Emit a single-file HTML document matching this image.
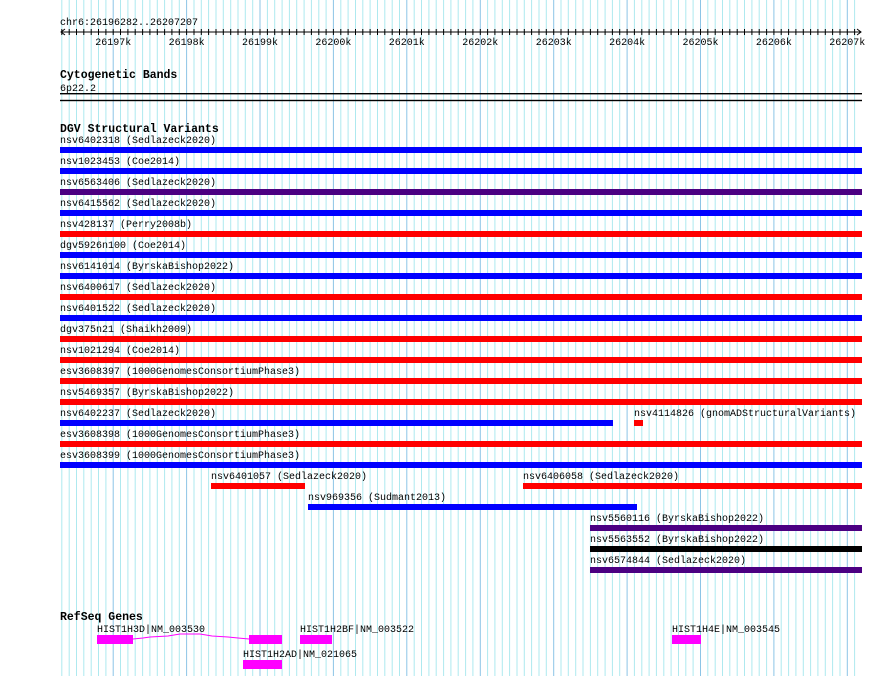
<!DOCTYPE html>
<html><head><meta charset="utf-8"><style>
html,body{margin:0;padding:0;background:#fff;width:890px;height:676px;overflow:hidden}
svg{display:block}
text{font-family:"Liberation Mono","DejaVu Sans Mono",monospace;font-size:10px;fill:#000}
.b{font-weight:bold;font-size:11.5px}
</style></head><body>
<svg id="s" width="890" height="676" xmlns="http://www.w3.org/2000/svg">
<g id="grid"></g>
<g id="rt"></g>
<text x="60" y="25">chr6:26196282..26207207</text>
<line x1="61" y1="32" x2="861" y2="32" stroke="#000" stroke-width="1"/>
<path d="M65,29 L61,32 L65,35 M857,29 L861,32 L857,35" fill="none" stroke="#000"/>
<text class="b" x="60" y="78">Cytogenetic Bands</text>
<text x="60" y="91">6p22.2</text>
<rect x="60" y="93" width="802" height="1.4" fill="#000"/>
<rect x="60" y="99.8" width="802" height="1.4" fill="#000"/>
<text class="b" x="60" y="132">DGV Structural Variants</text>
<g id="rows"></g>
<text class="b" x="60" y="620">RefSeq Genes</text>
<text x="97" y="632">HIST1H3D|NM_003530</text>
<rect x="97" y="635" width="36" height="9" fill="#ff00ff"/>
<path d="M133,639 L143,638 L150,637 L168,636 L180,634 L200,634 L212,636 L228,637 L238,638 L249,639" fill="none" stroke="#ff00ff" stroke-width="1"/>
<rect x="249" y="635" width="33" height="9" fill="#ff00ff"/>
<text x="300" y="632">HIST1H2BF|NM_003522</text>
<rect x="300" y="635" width="32" height="9" fill="#ff00ff"/>
<text x="243" y="657">HIST1H2AD|NM_021065</text>
<rect x="243" y="660" width="39" height="9" fill="#ff00ff"/>
<text x="672" y="632">HIST1H4E|NM_003545</text>
<rect x="672" y="635" width="29" height="9" fill="#ff00ff"/>
</svg>
<script>
var NS="http://www.w3.org/2000/svg";
function el(p,t,a){var e=document.createElementNS(NS,t);for(var k in a)e.setAttribute(k,a[k]);if(a.txt){e.textContent=a.txt;e.removeAttribute('txt');}p.appendChild(e);return e;}
var g=document.getElementById('grid'),rt=document.getElementById('rt'),rows=document.getElementById('rows');
var s=802/10925,st=26196282;
for(var bp=26196300;bp<=26207200;bp+=100){
 var x=Math.round((60+(bp-st)*s)*10)/10+0.5;
 if(x>861)break;
 var maj=bp%1000==0;
 el(g,'line',{x1:x,y1:0,x2:x,y2:676,stroke:maj?'#8cc4e6':'#aee9ef','stroke-width':1});
 el(rt,'line',{x1:x,y1:29,x2:x,y2:35,stroke:'#000','stroke-width':1});
 if(maj){el(rt,'text',{x:x,y:45,'text-anchor':'middle',txt:(bp/1000)+'k'});}
}
var B='#0000ff',R='#ff0000',P='#4b0082',K='#000';
var data=[
['nsv6402318 (Sedlazeck2020)',B],['nsv1023453 (Coe2014)',B],['nsv6563406 (Sedlazeck2020)',P],
['nsv6415562 (Sedlazeck2020)',B],['nsv428137 (Perry2008b)',R],['dgv5926n100 (Coe2014)',B],
['nsv6141014 (ByrskaBishop2022)',B],['nsv6400617 (Sedlazeck2020)',R],['nsv6401522 (Sedlazeck2020)',B],
['dgv375n21 (Shaikh2009)',R],['nsv1021294 (Coe2014)',R],['esv3608397 (1000GenomesConsortiumPhase3)',R],
['nsv5469357 (ByrskaBishop2022)',R],['nsv6402237 (Sedlazeck2020)',B,60,613],
['esv3608398 (1000GenomesConsortiumPhase3)',R],['esv3608399 (1000GenomesConsortiumPhase3)',B]];
data.forEach(function(d,i){var y=147+21*i;var x0=d[2]||60,x1=d[3]||862;
 el(rows,'text',{x:x0,y:y-4,txt:d[0]});
 el(rows,'rect',{x:x0,y:y,width:x1-x0,height:6,fill:d[1]});});
var extra=[
['nsv4114826 (gnomADStructuralVariants)',R,634,643,420],
['nsv6401057 (Sedlazeck2020)',R,211,305,483],
['nsv6406058 (Sedlazeck2020)',R,523,862,483],
['nsv969356 (Sudmant2013)',B,308,637,504],
['nsv5560116 (ByrskaBishop2022)',P,590,862,525],
['nsv5563552 (ByrskaBishop2022)',K,590,862,546],
['nsv6574844 (Sedlazeck2020)',P,590,862,567]];
extra.forEach(function(d){el(rows,'text',{x:d[2],y:d[4]-4,txt:d[0]});
 el(rows,'rect',{x:d[2],y:d[4],width:d[3]-d[2],height:6,fill:d[1]});});
</script>
</body></html>
